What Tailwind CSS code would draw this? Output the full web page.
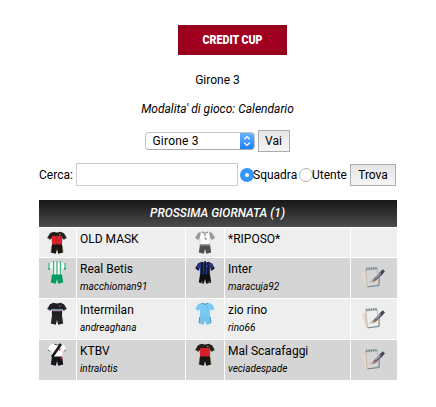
<!DOCTYPE html>
<html lang="it">
<head>
    <meta charset="UTF-8">
    <meta name="viewport" content="width=device-width, initial-scale=1.0">
    <title>Credit Cup - Girone 3</title>
    <script src="https://cdn.jsdelivr.net/npm/@tailwindcss/browser@4"></script>
</head>
<body class="bg-white font-['Roboto',sans-serif] text-[12px] leading-4 text-black">

    <!-- Shared icon shapes -->
    <svg class="hidden">
        <defs>
            <path id="shirt" d="M6.5 .8Q10 2 13.5 .8L17 2.2L19.8 7L16.8 8.8L15.2 7L15 14H5L4.8 7L3.2 8.8L.2 7L3 2.2Z"/>
            <path id="shorts" d="M5 13.5H15L16.2 21.5L11.2 22.7L10 18L8.8 22.7L3.8 21.5Z"/>
            <clipPath id="shirt-clip"><use href="#shirt"/></clipPath>
            <linearGradient id="page" x1="0" y1="0" x2="1" y2="1">
                <stop offset="0" stop-color="#94a9b1"/>
                <stop offset=".45" stop-color="#c9dadf"/>
                <stop offset="1" stop-color="#f4fbfc"/>
            </linearGradient>
            <symbol id="notes" viewBox="0 0 24 24">
                <path d="M1 8L5 6L7.5 21L4.5 20Z" fill="#ead8c2"/>
                <path d="M4.5 4L15.5 3L17 19L6 21Z" fill="url(#page)" stroke="#9ba8ac" stroke-width=".6"/>
                <path d="M6.5 21L17.5 19.7V11" fill="none" stroke="#6b777c" stroke-width=".8"/>
                <path d="M5 3.8L15 3" stroke="#6b8089" stroke-width="2.6" stroke-dasharray="1.2 1"/>
                <path d="M8 17L12 13.5" stroke="#a9bac0" stroke-width="1"/>
                <path d="M10.5 16.8L12.4 12.8L14.5 15Z" fill="#bd6e3e"/>
                <path d="M13.2 14L20.5 7" stroke="#716e7b" stroke-width="3"/>
                <path d="M18 9L22 5.2" stroke="#454452" stroke-width="3"/>
                <path d="M14 12.2L19 7.5" stroke="#a7a6b5" stroke-width="1"/>
            </symbol>
            <symbol id="kit-red" viewBox="0 0 20 23">
                <use href="#shirt" fill="#242020"/>
                <path d="M5 5H15V14H5Z" fill="#d9212a"/>
                <path d="M10 5V14" stroke="#bd2025"/>
                <use href="#shorts" fill="#191613"/>
                <path d="M.7 6.8L3.2 8.2M19.3 6.8L16.8 8.2M4.6 15L4.1 21M15.4 15L15.9 21" stroke="#8f7042" stroke-width=".7"/>
                <path d="M12 3.5h1.5" stroke="#b98b41"/>
            </symbol>
        </defs>
    </svg>

    <div class="flex w-[436px] flex-col items-center pt-[25px]">
        <div class="ml-7 flex h-[30px] w-[109px] items-center justify-center bg-[#a10020] pl-[2px] text-white shadow-[inset_0_0_6px_#80001a]">
            <span class="inline-block scale-x-[.82] whitespace-nowrap text-[13px] font-black">CREDIT CUP</span>
        </div>
        <p class="mt-[17px] pr-px">Girone 3</p>
        <p class="mt-[13px] pr-px italic">Modalita' di gioco: Calendario</p>

        <div class="mt-3 flex h-[23px] items-center gap-[3px] pr-[2px]">
            <div class="flex h-[18px] w-[110px] items-center justify-between overflow-hidden rounded-[4px] border border-[#c5c5c5] border-b-[#aaa] pl-[7px]">
                <span class="tracking-[.2px]">Girone 3</span>
                <span class="-mr-px flex h-[18px] w-[15px] items-center justify-center bg-linear-to-b from-[#6cb5fa] to-[#087dff]">
                    <svg class="h-[12px] w-[8px]" viewBox="0 0 8 12" fill="none" stroke="white" stroke-width="1.3"><path d="M1.3 4.2L4 1.6L6.7 4.2M1.3 7.8L4 10.4L6.7 7.8"/></svg>
                </span>
            </div>
            <div class="flex h-[22px] w-8 items-center justify-center border border-[#acacac] bg-linear-to-b from-[#e6e6e6] to-[#f5f5f5]">Vai</div>
        </div>

        <div class="mt-[11px] flex h-[23px] w-[358px] items-center">
            <span class="w-[37px] whitespace-nowrap">Cerca:</span>
            <div class="h-[23px] w-[162px] border border-[#ccc]"></div>
            <span class="ml-[2px] flex size-[14px] shrink-0 items-center justify-center rounded-full bg-[#3497f7]"><i class="size-1 rounded-full bg-white"></i></span>
            <span class="-ml-px w-[46px]">Squadra</span>
            <span class="size-[14px] shrink-0 rounded-full border border-[#b4b4b4]"></span>
            <span class="-ml-px w-[38px]">Utente</span>
            <div class="flex h-[22px] w-[46px] items-center justify-center border border-[#acacac] bg-linear-to-b from-[#e6e6e6] to-[#f5f5f5]">Trova</div>
        </div>

        <div class="mt-[14px] flex h-[27px] w-[358px] items-center justify-center bg-linear-to-b from-[#171717] to-[#4d4d4d] pr-px pb-px font-medium italic text-white">PROSSIMA GIORNATA (1)</div>

        <!-- Matches: home kit, home team, away kit, away team, notes -->
        <div class="mt-px grid w-[358px] grid-cols-[37px_108px_38px_125px_46px] grid-rows-[29px_40px_40px_40px] gap-px">
            <div class="bg-[#eee] pt-[3px] pl-2"><svg class="h-[23px] w-5"><use href="#kit-red"/></svg></div>
            <div class="bg-[#eee] pt-[3px] pl-[3px]">OLD MASK</div>
            <div class="bg-[#eee] pt-[3px] pl-[9px]">
                <svg class="h-[23px] w-5" viewBox="0 0 20 23">
                    <use href="#shirt" fill="#fafafa" stroke="#bbb" stroke-width=".5"/>
                    <path d="M3 2L6 1L4.8 7L3 8.8L.2 7ZM17 2L14 1L15.2 7L17 8.8L19.8 7Z" fill="#999"/>
                    <path d="M7 1Q10 4 13 1M10 3V5M9.5 7H11V9" fill="none" stroke="#777"/>
                    <use href="#shorts" fill="#505050"/>
                    <path d="M5 14.5H15" stroke="#777"/>
                </svg>
            </div>
            <div class="bg-[#eee] pt-[3px] pl-[3px]">*RIPOSO*</div>
            <div class="bg-[#eee]"></div>

            <div class="bg-[#d5d5d5] pt-[3px] pl-2">
                <svg class="h-[23px] w-5" viewBox="0 0 20 23">
                    <use href="#shirt" fill="#f4fbf7"/>
                    <path clip-path="url(#shirt-clip)" d="M6.5 0V14M10 0V14M13.5 0V14M2 2V9M18 2V9" stroke="#43b283" stroke-width="1.3"/>
                    <path d="M.7 6.8L3.2 8.3M19.3 6.8L16.8 8.3" stroke="#159662" stroke-width="1"/>
                    <use href="#shorts" fill="#079a61"/>
                </svg>
            </div>
            <div class="bg-[#d5d5d5] pt-[3px] pl-[3px]">Real Betis<div class="mt-[2px] text-[10px] tracking-[.03px] italic">macchioman91</div></div>
            <div class="bg-[#d5d5d5] pt-[3px] pl-[9px]">
                <svg class="h-[23px] w-5" viewBox="0 0 20 23">
                    <use href="#shirt" fill="#28357f"/>
                    <path clip-path="url(#shirt-clip)" d="M7 1V14M10 0V14M13 1V14M1 7L4 9M19 7L16 9" stroke="#111320" stroke-width="1.6"/>
                    <use href="#shorts" fill="#10100f"/>
                    <path d="M12 5h1M6 21h2M13 21h2" stroke="#a18b4a" stroke-width=".8"/>
                </svg>
            </div>
            <div class="bg-[#d5d5d5] pt-[3px] pl-[3px]">Inter<div class="mt-[2px] text-[10px] italic">maracuja92</div></div>
            <div class="bg-[#d5d5d5] pt-[7px] pl-[10px]"><svg class="size-[25px]"><use href="#notes"/></svg></div>

            <div class="bg-[#eee] pt-[3px] pl-2">
                <svg class="h-[23px] w-5" viewBox="0 0 20 23">
                    <use href="#shirt" fill="#202022"/>
                    <path d="M5 8H15" stroke="#8ea8c8" stroke-width="1.4"/>
                    <path d="M6 9H14" stroke="#b75859" stroke-width=".7"/>
                    <path d="M12 4h2" stroke="#63788c"/>
                    <use href="#shorts" fill="#252526"/>
                    <path d="M5 8H15" stroke="#8ea8c8" stroke-width="1.2"/>
                    <path d="M.7 6.8L3.2 8.2M19.3 6.8L16.8 8.2" stroke="#777" stroke-width=".6"/>
                </svg>
            </div>
            <div class="bg-[#eee] pt-[3px] pl-[3px]">Intermilan<div class="mt-[2px] text-[10px] italic">andreaghana</div></div>
            <div class="bg-[#eee] pt-[3px] pl-[9px]">
                <svg class="h-[23px] w-5" viewBox="0 0 20 23">
                    <use href="#shirt" fill="#7acbf3"/>
                    <use href="#shorts" fill="#72c4ed"/>
                    <path d="M7 1Q10 4 13 1M4.6 15L4.2 21M15.4 15L15.8 21M12 5h1" fill="none" stroke="#4489ac" stroke-width=".8"/>
                </svg>
            </div>
            <div class="bg-[#eee] pt-[3px] pl-[3px]">zio rino<div class="mt-[2px] text-[10px] italic">rino66</div></div>
            <div class="bg-[#eee] pt-[7px] pl-[10px]"><svg class="size-[25px]"><use href="#notes"/></svg></div>

            <div class="bg-[#d5d5d5] pt-[3px] pl-2">
                <svg class="h-[23px] w-5" viewBox="0 0 20 23">
                    <use href="#shirt" fill="#fff"/>
                    <path clip-path="url(#shirt-clip)" d="M14 1L5 14" stroke="#171717" stroke-width="2.6"/>
                    <path d="M7 1Q10 3 13 1M.7 6.8L3.2 8.3M19.3 6.8L16.8 8.3" fill="none" stroke="#333" stroke-width=".8"/>
                    <path d="M12 6.5h1.5" stroke="#e02738" stroke-width="1.8"/>
                    <use href="#shorts" fill="#13151b"/>
                    <path d="M13.5 15h2" stroke="#d82537" stroke-width="2"/>
                </svg>
            </div>
            <div class="bg-[#d5d5d5] pt-[3px] pl-[3px]">KTBV<div class="mt-[2px] text-[10px] italic">intralotis</div></div>
            <div class="bg-[#d5d5d5] pt-[3px] pl-[9px]"><svg class="h-[23px] w-5"><use href="#kit-red"/></svg></div>
            <div class="bg-[#d5d5d5] pt-[3px] pl-[3px]">Mal Scarafaggi<div class="mt-[2px] text-[10px] italic">veciadespade</div></div>
            <div class="bg-[#d5d5d5] pt-[7px] pl-[10px]"><svg class="size-[25px]"><use href="#notes"/></svg></div>
        </div>
    </div>

</body>
</html>
